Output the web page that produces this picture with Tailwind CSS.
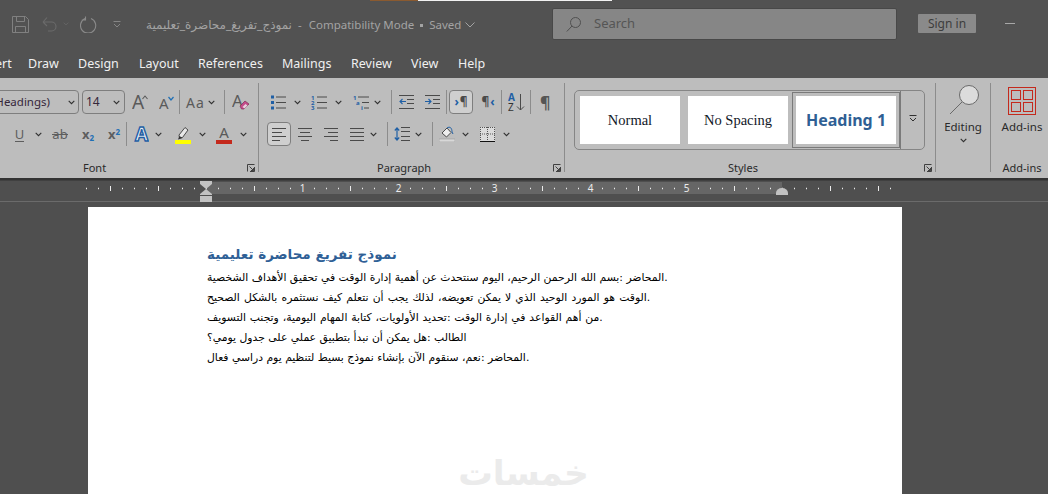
<!DOCTYPE html>
<html lang="en">
<head>
<meta charset="utf-8">
<title>Word</title>
<script src="https://cdn.jsdelivr.net/npm/@tailwindcss/browser@4"></script>
</head>
<body class="w-[1048px] h-[494px] overflow-hidden bg-[#4f4f4f] font-['Noto_Sans','DejaVu_Sans',sans-serif]">
<svg class="hidden">
  <symbol id="chev" viewBox="0 0 7 5"><path d="M.7.8 3.5 3.6 6.3.8" fill="none" stroke="#303030" stroke-width="1.1"/></symbol>
  <symbol id="launch" viewBox="0 0 8 8"><path d="M.5 7.5V.5h7M7.5 3v4.5H3M2.5 2.5l4 4M6.5 4v2.5H4" fill="none" stroke="#404040" stroke-width="1"/></symbol>
</svg>

<!-- title bar + tabs -->
<header class="relative h-[78px] bg-[#525252]">
  <div class="absolute top-0 left-[370px] w-[48px] h-px bg-[#8a5a30]"></div>
  <div class="absolute top-0 left-[418px] w-[194px] h-px bg-[#f2f2f2]"></div>
  <div class="h-[46px] flex items-center">
    <svg class="ml-[12px] mt-[2px] w-[17px] h-[17px]" viewBox="0 0 17 17" fill="none" stroke="#808080"><path d="M.5.5h13l3 3v13H.5z"/><path d="M4.500.5v5h8v-5M3.500 16.500v-6h10v6"/></svg>
    <svg class="ml-[13px] mt-[2px] w-[15px] h-[16px]" viewBox="0 0 15 16" fill="none" stroke="#6b6b6b" stroke-width="1.100"><path d="M1 6h8.500a4.500 4.500 0 0 1 0 9H6M1 6l4-4.500M1 6l4 4"/></svg>
    <svg class="ml-[6px] mt-[2px] w-[6px] h-[4px]" viewBox="0 0 7 5"><path d="M.7.8 3.500 3.600 6.300.8" fill="none" stroke="#6b6b6b"/></svg>
    <svg class="ml-[11px] mt-[2px] w-[17px] h-[17px]" viewBox="0 0 17 17" fill="none" stroke="#8a8a8a" stroke-width="1.100"><path d="M11 2.500A7.600 7.600 0 1 1 5 2.600M5.500.5V4H1.800"/></svg>
    <svg class="ml-[16px] mt-[2px] w-[8px] h-[7px]" viewBox="0 0 8 7" fill="none" stroke="#858585"><path d="M.5.5h7M1 3l3 3 3-3"/></svg>
    <div class="ml-[25px] mt-[4px] w-[385px] flex items-center text-[11.5px] text-[#a3a3a3] whitespace-nowrap">
      <span class="w-[145px] text-[12px]">نموذج_تفريغ_محاضرة_تعليمية</span>
      <span class="ml-[7px]">-</span>
      <span class="ml-[7px]">Compatibility Mode</span>
      <span class="ml-[6px] w-[3px] h-[3px] bg-[#a3a3a3]"></span>
      <span class="ml-[6px]">Saved</span>
      <svg class="ml-[4px] w-[10px] h-[6px]" viewBox="0 0 10 6" fill="none" stroke="#a3a3a3"><path d="M.5.5 5 5 9.500.5"/></svg>
    </div>
    <div class="ml-[21px] mt-[2px] w-[345px] h-[32px] flex items-center rounded-[2px] border border-[#484848] bg-[#868686]">
      <svg class="ml-[13px] w-[15px] h-[15px]" viewBox="0 0 15 15" fill="none" stroke="#505050"><circle cx="9.500" cy="5.500" r="5"/><path d="M6 9 .8 14.500"/></svg>
      <span class="ml-[13px] text-[13px] text-[#555555]">Search</span>
    </div>
    <div class="ml-[21px] mt-[1px] w-[58px] h-[19px] flex items-center justify-center rounded-[1px] bg-[#8a8a8a] text-[12px] text-[#3d3d3d]">Sign in</div>
    <div class="ml-[29px] w-[10px] h-px bg-[#a8a8a8]"></div>
  </div>
  <nav class="h-[32px] pt-[4px] flex items-center text-[12.5px] text-[#f0f0f0] whitespace-nowrap">
    <span class="-ml-[23px] w-[30px] text-right">Insert</span>
    <span class="ml-[21px] w-[30px]">Draw</span>
    <span class="ml-[20px] w-[40px]">Design</span>
    <span class="ml-[21px] w-[38px]">Layout</span>
    <span class="ml-[21px] w-[64px]">References</span>
    <span class="ml-[20px] w-[49px]">Mailings</span>
    <span class="ml-[20px] w-[40px]">Review</span>
    <span class="ml-[20px] w-[28px]">View</span>
    <span class="ml-[19px]">Help</span>
  </nav>
</header>

<!-- ribbon -->
<section class="h-[100px] flex bg-[#bdbdbd] text-[#2a2a2a] overflow-hidden">
  <!-- Font -->
  <div class="w-[259px] mt-[5px] h-[89px] shrink-0 border-r border-[#8c8c8c] pt-[7px]">
    <div class="h-6 flex items-center">
      <div class="-ml-[20px] w-[99px] h-6 flex items-center justify-end pr-[2px] border border-[#7e7e7e] rounded-[4px] text-[11.5px] text-[#35263a]">
        <span>(Headings)</span><svg class="ml-[18px] mr-[1px] w-[7px] h-[5px]"><use href="#chev"/></svg>
      </div>
      <div class="ml-[3px] w-[43px] h-6 flex items-center justify-between px-[3px] border border-[#7e7e7e] rounded-[4px] text-[12px] text-[#35263a]">
        <span>14</span><svg class="mr-[1px] w-[7px] h-[5px]"><use href="#chev"/></svg>
      </div>
      <svg class="ml-[7px] w-[16px] h-[20px]" viewBox="0 0 16 20"><text x="0" y="17" font-size="19" fill="#5a5a5a" font-family="Noto Sans">A</text><path d="M10.500 7 13 4l2.500 3" fill="none" stroke="#5a5a5a" stroke-width="1.100"/></svg>
      <svg class="ml-[11px] w-[15px] h-[20px]" viewBox="0 0 15 20"><text x="0" y="17" font-size="15" fill="#5a5a5a" font-family="Noto Sans">A</text><path d="M9.500 5 12 8l2.500-3" fill="none" stroke="#1f6fb5" stroke-width="1.200"/></svg>
      <div class="ml-[5px] w-px h-6 bg-[#8c8c8c]"></div>
      <span class="ml-[6px] w-[18px] text-[14px] text-[#5a5a5a] tracking-[1px]">Aa</span>
      <svg class="ml-[4px] w-[7px] h-[5px]"><use href="#chev"/></svg>
      <div class="ml-[9px] w-px h-6 bg-[#8c8c8c]"></div>
      <svg class="ml-[7px] w-[18px] h-[22px]" viewBox="0 0 18 22"><text x="0" y="16" font-size="17" fill="#5a5a5a" font-family="Noto Sans">A</text><path d="m8 15 5-5 4 3-5 5H9.500z" fill="#c44b8a" stroke="#7b2d58" stroke-width=".7"/><path d="m10.500 16 3-3 2 1.500-3 3z" fill="#e8d0dd"/></svg>
    </div>
    <div class="mt-2 h-6 flex items-center">
      <div class="ml-[15px] w-[9px] flex flex-col items-center text-[13px] leading-[14px] text-[#5e5e5e] border-b border-[#5e5e5e]">U</div>
      <svg class="ml-[11px] w-[7px] h-[5px]"><use href="#chev"/></svg>
      <span class="ml-[10px] w-[16px] relative text-[13px] leading-4 text-center text-[#5e5e5e]">ab<span class="absolute left-0 right-0 top-[8px] h-px bg-[#5e5e5e]"></span></span>
      <span class="ml-[14px] w-[12px] whitespace-nowrap text-[13px] font-bold text-[#5e5e5e] leading-4">x<sub class="text-[8px] font-bold text-[#1f6fb5]">2</sub></span>
      <span class="ml-[14px] w-[12px] whitespace-nowrap text-[13px] font-bold text-[#5e5e5e] leading-4">x<sup class="text-[8px] font-bold text-[#1f6fb5]">2</sup></span>
      <div class="ml-[6px] w-px h-6 bg-[#8c8c8c]"></div>
      <svg class="ml-[7px] w-[15px] h-[17px]" viewBox="0 0 15 17"><text x="7.500" y="15" text-anchor="middle" font-size="19" font-weight="700" fill="#e9eef4" stroke="#1f5fa5" stroke-width="1.400" font-family="Noto Sans">A</text></svg>
      <svg class="ml-[6px] w-[7px] h-[5px]"><use href="#chev"/></svg>
      <svg class="ml-[13px] w-[16px] h-[19px]" viewBox="0 0 16 19"><path d="m4 10 6-7.500 3 2.500-5.500 7.500L4.500 13z" fill="#e8e8e8" stroke="#4a4a4a"/><path d="M3 14.500 4.500 11l3 2z" fill="#333"/><rect y="15" width="16" height="4" fill="#ffff00"/></svg>
      <svg class="ml-[8px] w-[7px] h-[5px]"><use href="#chev"/></svg>
      <svg class="ml-[10px] w-[16px] h-[19px]" viewBox="0 0 16 19"><text x="8" y="13" text-anchor="middle" font-size="15" fill="#5a5a5a" font-family="Noto Sans">A</text><rect y="15" width="16" height="4" fill="#c4291c"/></svg>
      <svg class="ml-[8px] w-[7px] h-[5px]"><use href="#chev"/></svg>
    </div>
    <div class="mt-[15px] h-[14px] flex items-center text-[11px]"><span class="ml-[83px]">Font</span><svg class="ml-auto mr-[3px] w-[8px] h-[8px]"><use href="#launch"/></svg></div>
  </div>

  <!-- Paragraph -->
  <div class="w-[306px] mt-[5px] h-[89px] shrink-0 border-r border-[#8c8c8c] pt-[7px]">
    <div class="h-6 flex items-center">
      <svg class="ml-[12px] w-[15px] h-[15px]" viewBox="0 0 15 15"><path d="M0 .5h3v3H0zM0 6h3v3H0zM0 11.500h3v3H0z" fill="#1f5fa5"/><path d="M5 2h10M5 7.500h10M5 13h10" stroke="#4a4a4a"/></svg>
      <svg class="ml-[8px] w-[7px] h-[5px]"><use href="#chev"/></svg>
      <svg class="ml-[10px] w-[16px] h-[15px]" viewBox="0 0 16 15"><text x="0" y="5" font-size="6" font-weight="700" fill="#1f5fa5" font-family="Noto Sans">1</text><text x="0" y="10" font-size="6" font-weight="700" fill="#1f5fa5" font-family="Noto Sans">2</text><text x="0" y="15" font-size="6" font-weight="700" fill="#1f5fa5" font-family="Noto Sans">3</text><path d="M6 2h10M6 7.500h10M6 13h10" stroke="#4a4a4a"/></svg>
      <svg class="ml-[8px] w-[7px] h-[5px]"><use href="#chev"/></svg>
      <svg class="ml-[11px] w-[16px] h-[15px]" viewBox="0 0 16 15"><text x="0" y="5" font-size="6" font-weight="700" fill="#1f5fa5" font-family="Noto Sans">1</text><text x="3" y="10" font-size="6" font-weight="700" fill="#1f5fa5" font-family="Noto Sans">a</text><text x="8" y="15" font-size="6" font-weight="700" fill="#1f5fa5" font-family="Noto Sans">i</text><path d="M5 2h11M9 7.500h7M11 13h5" stroke="#4a4a4a"/></svg>
      <svg class="ml-[5px] w-[7px] h-[5px]"><use href="#chev"/></svg>
      <div class="ml-[10px] w-px h-6 bg-[#8c8c8c]"></div>
      <svg class="ml-[7px] w-[15px] h-[14px]" viewBox="0 0 15 14"><path d="M0 .5h15M8 4.500h7M8 8.500h7M0 13.500h15" stroke="#4a4a4a"/><path d="M7 6.500H1M3.500 4 1 6.500 3.500 9" fill="none" stroke="#1f5fa5" stroke-width="1.100"/></svg>
      <svg class="ml-[11px] w-[15px] h-[14px]" viewBox="0 0 15 14"><path d="M0 .5h15M8 4.500h7M8 8.500h7M0 13.500h15" stroke="#4a4a4a"/><path d="M0 6.500h6M3.500 4 6 6.500 3.500 9" fill="none" stroke="#1f5fa5" stroke-width="1.100"/></svg>
      <div class="ml-[6px] w-px h-6 bg-[#8c8c8c]"></div>
      <div class="ml-[2px] w-[24px] h-6 flex items-center justify-center gap-px rounded-[4px] border border-[#7e7e7e] bg-[#cfcfcf] text-[12px] font-bold leading-none text-[#4a4a4a]"><span class="text-[#1f5fa5]">›</span><span>¶</span></div>
      <div class="ml-[8px] w-[14px] flex items-center justify-center gap-px text-[12px] font-bold leading-none text-[#4a4a4a]"><span>¶</span><span class="text-[#1f5fa5]">‹</span></div>
      <div class="ml-[6px] w-px h-6 bg-[#8c8c8c]"></div>
      <svg class="ml-[6px] w-[17px] h-[18px]" viewBox="0 0 17 18"><text x="0" y="8" font-size="10" font-weight="700" fill="#1f5fa5" font-family="Noto Sans">A</text><text x="0" y="18" font-size="10" fill="#333" font-family="Noto Sans">Z</text><path d="M12.500 1v16M9 13.500l3.500 3.500 3.500-3.500" fill="none" stroke="#4a4a4a"/></svg>
      <div class="ml-[5px] w-px h-6 bg-[#8c8c8c]"></div>
      <span class="ml-[9px] text-[16px] font-bold leading-none text-[#555555]">¶</span>
    </div>
    <div class="mt-2 h-6 flex items-center">
      <div class="ml-[8px] w-[24px] h-6 flex items-center justify-center rounded-[4px] border border-[#7e7e7e] bg-[#cfcfcf]">
        <svg class="w-[14px] h-[13px]" viewBox="0 0 14 13"><path d="M0 .5h14M0 4.500h10M0 8.500h14M0 12.500h8" stroke="#4a4a4a"/></svg>
      </div>
      <svg class="ml-[7px] w-[14px] h-[13px]" viewBox="0 0 14 13"><path d="M0 .5h14M2 4.500h10M0 8.500h14M3 12.500h8" stroke="#4a4a4a"/></svg>
      <svg class="ml-[12px] w-[14px] h-[13px]" viewBox="0 0 14 13"><path d="M0 .5h14M4 4.500h10M0 8.500h14M6 12.500h8" stroke="#4a4a4a"/></svg>
      <svg class="ml-[12px] w-[14px] h-[13px]" viewBox="0 0 14 13"><path d="M0 .5h14M0 4.500h14M0 8.500h14M0 12.500h14" stroke="#4a4a4a"/></svg>
      <svg class="ml-[6px] w-[7px] h-[5px]"><use href="#chev"/></svg>
      <div class="ml-[10px] w-px h-6 bg-[#8c8c8c]"></div>
      <svg class="ml-[6px] w-[16px] h-[14px]" viewBox="0 0 16 14"><path d="M7 .5h9M7 4.500h9M7 9.500h9M7 13.500h9" stroke="#4a4a4a"/><path d="M3 1v12M.8 3.500 3 1l2.200 2.500M.8 10.500 3 13l2.200-2.500" fill="none" stroke="#1f5fa5" stroke-width="1.200"/></svg>
      <svg class="ml-[5px] w-[7px] h-[5px]"><use href="#chev"/></svg>
      <div class="ml-[10px] w-px h-6 bg-[#8c8c8c]"></div>
      <svg class="ml-[6px] w-[16px] h-[16px]" viewBox="0 0 16 16"><path d="m3 7 5-5 4 4.500-4.500 4.500z" fill="#eeeeee" stroke="#4a4a4a"/><path d="M8 2c3-2 5 0 5 4l1 2" fill="none" stroke="#1f5fa5"/><rect y="13" width="16" height="3" fill="#d8d8d8" stroke="#9a9a9a" stroke-width=".6"/></svg>
      <svg class="ml-[7px] w-[7px] h-[5px]"><use href="#chev"/></svg>
      <svg class="ml-[11px] w-[15px] h-[15px]" viewBox="0 0 15 15"><rect width="15" height="14" fill="#dcdcdc"/><path d="M.5 0v14M7.500 0v14M14.500 0v14M0 .5h15M0 7h15" stroke="#555" stroke-dasharray="1 1"/><path d="M0 14.500h15" stroke="#111"/></svg>
      <svg class="ml-[8px] w-[7px] h-[5px]"><use href="#chev"/></svg>
    </div>
    <div class="mt-[15px] h-[14px] flex items-center text-[11px]"><span class="ml-[118px]">Paragraph</span><svg class="ml-auto mr-[3px] w-[8px] h-[8px]"><use href="#launch"/></svg></div>
  </div>

  <!-- Styles -->
  <div class="w-[371px] mt-[5px] h-[89px] shrink-0 border-r border-[#8c8c8c] pt-[7px]">
    <div class="ml-[9px] w-[351px] h-[60px] flex rounded-[5px] border border-[#858585]">
      <div class="flex-1 flex items-center pl-[5px] gap-[8px]">
        <div class="w-[100px] h-[48px] pt-[2px] flex items-center justify-center bg-white text-[14.5px] text-[#111827] font-['Liberation_Serif',serif]">Normal</div>
        <div class="w-[100px] h-[48px] pt-[2px] flex items-center justify-center bg-white text-[14.5px] text-[#111827] font-['Liberation_Serif',serif]">No Spacing</div>
        <div class="-ml-[4px] w-[108px] h-[56px] flex items-center justify-center border border-[#7a7a7a] bg-[#bdbdbd]">
          <div class="w-[100px] h-[48px] flex items-center justify-center bg-white text-[16px] font-bold text-[#2f5f94]">Heading 1</div>
        </div>
      </div>
      <div class="w-[24px] flex flex-col items-center justify-center border-l border-[#7a7a7a]">
        <svg class="-mt-[4px] w-[8px] h-[7px]" viewBox="0 0 8 7" fill="none" stroke="#303030"><path d="M.5.500h7M1 3l3 3 3-3"/></svg>
      </div>
    </div>
    <div class="mt-[11px] h-[14px] flex items-center text-[11px]"><span class="ml-[163px]">Styles</span><svg class="ml-auto mr-[3px] w-[8px] h-[8px]"><use href="#launch"/></svg></div>
  </div>

  <!-- Editing -->
  <div class="w-[55px] mt-[5px] h-[89px] shrink-0 border-r border-[#8c8c8c] flex flex-col items-center">
    <svg class="ml-[2px] mt-[2px] w-[30px] h-[30px] shrink-0" viewBox="0 0 30 30"><circle cx="20" cy="10" r="9.500" fill="#dcdcdc" stroke="#6a6a6a"/><path d="M13 17 1 29" stroke="#6a6a6a"/></svg>
    <span class="mt-[4px] text-[11.5px] leading-[16px]">Editing</span>
    <svg class="mt-[3px] w-[7px] h-[5px] shrink-0"><use href="#chev"/></svg>
  </div>

  <!-- Add-ins -->
  <div class="w-[57px] mt-[5px] h-[89px] shrink-0 pl-[5px] flex flex-col items-center">
    <svg class="mt-[4px] w-[28px] h-[28px] shrink-0" viewBox="0 0 28 28" fill="none" stroke="#c4291c"><rect x=".5" y=".5" width="27" height="27"/><rect x="3.500" y="3.500" width="9" height="9"/><rect x="15.500" y="3.500" width="9" height="9"/><rect x="3.500" y="15.500" width="9" height="9"/><rect x="15.500" y="15.500" width="9" height="9"/></svg>
    <span class="mt-[4px] text-[11.5px] leading-[16px] shrink-0">Add-ins</span>
    <span class="mt-[26px] text-[11px] leading-[14px] shrink-0">Add-ins</span>
  </div>
</section>

<!-- ruler -->
<svg class="block w-[1048px] h-[24px]" viewBox="0 0 1048 24">
  <rect width="1048" height="24" fill="#4f4f4f"/>
  <rect width="1048" height="2.500" fill="#333333"/>
  <rect y="23" width="1048" height="1" fill="#6b6b6b"/>
  <rect x="206" y="4" width="576" height="12" fill="#666666"/>
  <line x1="86" x2="891" y1="10.500" y2="10.500" stroke="#ececec" stroke-width="1.500" stroke-dasharray="1 11"/>
  <g stroke="#ececec">
    <path d="M110.500 8v5M158.500 8v5M254.500 8v5M350.500 8v5M446.500 8v5M542.500 8v5M638.500 8v5M734.500 8v5M830.500 8v5M878.500 8v5"/>
  </g>
  <g fill="#666666"><rect x="297" y="4" width="11" height="12"/><rect x="393" y="4" width="11" height="12"/><rect x="489" y="4" width="11" height="12"/><rect x="585" y="4" width="11" height="12"/><rect x="681" y="4" width="11" height="12"/></g>
  <g fill="#ececec" font-size="10" text-anchor="middle" font-family="Noto Sans">
    <text x="302.500" y="14">1</text><text x="398.500" y="14">2</text><text x="494.500" y="14">3</text><text x="590.500" y="14">4</text><text x="686.500" y="14">5</text>
  </g>
  <g fill="#c2c2c2">
    <path d="M200 3h12v3l-6 5-6-5z"/>
    <path d="M206 11l6 5v1H200v-1z"/>
    <rect x="200" y="18" width="12" height="6"/>
    <path d="M776 17v-2a6 5 0 0 1 12 0v2z"/>
  </g>
</svg>

<!-- document -->
<main class="h-[292px] pt-[5px] overflow-hidden">
  <article class="ml-[88px] w-[814px] h-[300px] bg-white pl-[119px] pt-[36px]" dir="ltr">
    <h1 class="text-[13.5px] leading-[22px] font-bold text-[#2f6096] font-['DejaVu_Sans',sans-serif]">نموذج تفريغ محاضرة تعليمية</h1>
    <div class="mt-[3px] text-[10.8px] leading-[20px] text-black font-['DejaVu_Sans',sans-serif] whitespace-nowrap">
      <p>المحاضر :بسم الله الرحمن الرحيم، اليوم سنتحدث عن أهمية إدارة الوقت في تحقيق الأهداف الشخصية.</p>
      <p class="[word-spacing:0.7px]">الوقت هو المورد الوحيد الذي لا يمكن تعويضه، لذلك يجب أن نتعلم كيف نستثمره بالشكل الصحيح.</p>
      <p class="[word-spacing:0.4px]">من أهم القواعد في إدارة الوقت :تحديد الأولويات، كتابة المهام اليومية، وتجنب التسويف.</p>
      <p>الطالب :هل يمكن أن نبدأ بتطبيق عملي على جدول يومي؟</p>
      <p>المحاضر :نعم، سنقوم الآن بإنشاء نموذج بسيط لتنظيم يوم دراسي فعال.</p>
    </div>
    <div class="ml-[253px] mt-[85px] w-[127px] flex justify-center text-[34.5px] leading-[40px] font-bold text-[#ebebeb] font-['DejaVu_Sans',sans-serif] whitespace-nowrap">خمسات</div>
  </article>
</main>
</body>
</html>
